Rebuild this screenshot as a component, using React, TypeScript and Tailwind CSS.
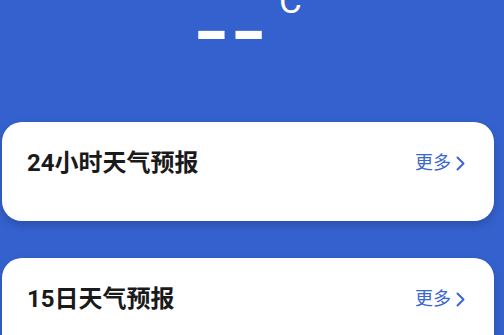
import React from 'react';

const font = { fontFamily: '"Roboto", "Noto Sans CJK SC", sans-serif' };

function Chevron() {
  return (
    <svg width="11" height="15" viewBox="0 0 11 15" fill="none" className="ml-[4px]">
      <polyline points="2.5,1.5 8.5,7.5 2.5,13.5" stroke="#3a66cf" strokeWidth="2" strokeLinecap="round" strokeLinejoin="round" />
    </svg>
  );
}

function ForecastCard({ title }: { title: string }) {
  return (
    <div className="ml-[2px] mr-[10px] h-[99px] rounded-[20px] bg-white shadow-[0_4px_8px_rgba(0,0,0,0.18)]">
      <div className="flex h-[82px] items-center justify-between pl-[25px] pr-[28px]">
        <h3 className="text-[24px] font-bold leading-none text-[#1a1a1a]">{title}</h3>
        <button className="flex items-center text-[18px] leading-none text-[#3a66cf]">
          更多
          <Chevron />
        </button>
      </div>
    </div>
  );
}

export default function App() {
  return (
    <div className="h-[335px] overflow-hidden bg-[#3461ce]" style={font}>
      <div className="-mt-[24px] flex justify-center pr-[6px] text-white">
        <span className="flex gap-[7px] text-[110px] leading-none">
          <span>-</span>
          <span>-</span>
        </span>
        <span className="ml-[2px] mt-[8px] text-[35px] leading-none">°C</span>
      </div>
      <div className="mt-[36px] flex flex-col gap-[37px]">
        <ForecastCard title="24小时天气预报" />
        <ForecastCard title="15日天气预报" />
      </div>
    </div>
  );
}
